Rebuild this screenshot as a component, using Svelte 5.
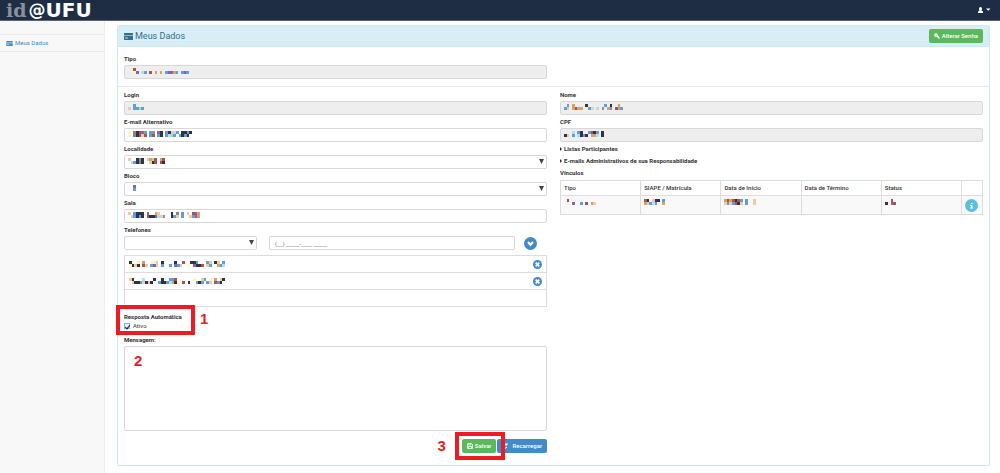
<script lang="ts">
	type Pixels = string[];

	// one letter per tile, a dot is an empty tile
	const palette: Record<string, string> = {
		k: '#333339',
		g: '#85858c',
		n: '#29306e',
		b: '#5d9fdc',
		c: '#a9e2f5',
		p: '#8a61ad',
		r: '#a9544f',
		o: '#dda062',
		s: '#f3ca9b',
		y: '#fdf3c9',
		m: '#b8d8a8'
	};
	const TILE = 8 / 3;

	const hidden: Record<string, Pixels> = {
		tipo: ['..r....................', '..yp.cb.r.o.o.bppob.bpb'],
		login: ['..b...', 's.bbmb'],
		email: ['y.gkrpb.bb.pk.bkscb.kkbk', 'y.gkrsr.br.bk.bcmb.bkbk.'],
		localidade: ['s..kbk.somr.or', '.cbkgk..skr.rk'],
		bloco: ['..p', '..b'],
		sala: ['s.bnkk.p..os....k.g.b.s.rpo', '.sbnbk.rkkpcsb..kbs.b..sbpo'],
		nome: ['.b.o....k......b.k..o.', 'bs.oroo..bc.s.b.ob.rob'],
		cpf: ['...c.bk..brkb.k', 'ks.b.ckbk.ooc.k'],
		phone1: ['k..y.o..yys.k....n..r..kkb...bs.ks.b', 'yksk.rs.bps.b..b.pbs..y.pkkr.sb..obc'],
		phone2: ['sk...c...k..k..bbr......y..sb.y.o.sk', '.skkbsnsk..bkkbcoky.r.k..bkb.bs.rbk.'],
		vTipo: ['.r..........', '.y.p..b.r.os'],
		vSiape: ['rk.snn.b', 'osbcb..o'],
		vInicio: ['ororkrb.b..s', 'sbsbrks.b..s'],
		vStatus: ['..r.', 'k.pr']
	};

	const columns = ['Tipo', 'SIAPE / Matrícula', 'Data de Início', 'Data de Término', 'Status', ''];

	let ativo = $state(true);
	let mensagem = $state('');
	let telefone = $state('(__) _____-____ _____');
	let telefones = $state(['phone1', 'phone2']);

	function removeTelefone(id: string) {
		telefones = telefones.filter((t) => t !== id);
	}
</script>

{#snippet mosaic(id: string)}
	<svg class="mosaic" width={Math.round(hidden[id][0].length * TILE)} height="6" viewBox="0 0 {hidden[id][0].length} 2" preserveAspectRatio="none" shape-rendering="crispEdges" aria-hidden="true">
		{#each hidden[id] as row, y}
			{#each row.split('') as tile, x}
				{#if palette[tile]}
					<rect {x} {y} width="1" height="1" fill={palette[tile]} />
				{/if}
			{/each}
		{/each}
	</svg>
{/snippet}

{#snippet card()}
	<svg class="card-icon" viewBox="0 0 18 14" aria-hidden="true">
		<path fill="currentColor" d="M1 0h16a1 1 0 0 1 1 1v3H0V1a1 1 0 0 1 1-1zM0 6h18v7a1 1 0 0 1-1 1H1a1 1 0 0 1-1-1z" />
		<path fill="currentColor" opacity=".4" d="M0 4h18v2H0z" />
		<path fill="#fff" opacity=".7" d="M2 9h6v2H2z" />
	</svg>
{/snippet}

{#snippet textField(id: string, label: string, locked: boolean)}
	<div class="field">
		<label for={id}>{label}</label>
		<div class="control">
			<input {id} type="text" disabled={locked} />
			{@render mosaic(id)}
		</div>
	</div>
{/snippet}

{#snippet arrow()}
	<svg class="arrow" viewBox="0 0 6 6" aria-hidden="true"><path d="M0 0h6L3 6z" fill="#444" /></svg>
{/snippet}

{#snippet selectField(id: string, label: string)}
	<div class="field">
		<label for={id}>{label}</label>
		<div class="control">
			<select {id}><option></option></select>
			{@render mosaic(id)}
			{@render arrow()}
		</div>
	</div>
{/snippet}

<div class="page">
	<header class="navbar">
		<a class="brand" href="#inicio"><span class="id">id</span><span class="at">@</span>UFU</a>
		<button class="user" aria-label="Usuário">
			<svg width="13" height="6" viewBox="0 0 26 12" aria-hidden="true">
				<path fill="#fff" d="M5 0a3 3 0 0 1 3 3c0 2-1 3-1 4l3 2v3H0V9l3-2c0-1-1-2-1-4a3 3 0 0 1 3-3zM16 3h9l-4.500 4.500z" />
			</svg>
		</button>
	</header>

	<div class="body">
		<nav class="sidebar">
			<a href="#dados">{@render card()}Meus Dados</a>
		</nav>

		<main>
			<section class="panel">
				<div class="panel-heading">
					<h1>{@render card()}Meus Dados</h1>
					<button class="btn green">
						<svg width="6" height="6" viewBox="0 0 12 12" fill="none" stroke="#fff" stroke-width="2.500" aria-hidden="true">
							<circle cx="4" cy="4" r="2.500" />
							<path d="M6 6l5 5M8 9l2-2" />
						</svg>
						Alterar Senha
					</button>
				</div>

				<div class="grid first">
					{@render textField('tipo', 'Tipo', true)}
				</div>

				<div class="grid">
					<div>
						{@render textField('login', 'Login', true)}
						{@render textField('email', 'E-mail Alternativo', false)}
						{@render selectField('localidade', 'Localidade')}
						{@render selectField('bloco', 'Bloco')}
						{@render textField('sala', 'Sala', false)}

						<div class="field">
							<label for="telefone">Telefones</label>
							<div class="phone">
								<div class="control kind">
									<select aria-label="Tipo de telefone"><option></option></select>
									{@render arrow()}
								</div>
								<div class="phone-number">
									<input id="telefone" type="text" bind:value={telefone} />
									<button class="round blue" aria-label="Adicionar telefone">
										<svg viewBox="0 0 13 13" aria-hidden="true"><path d="M4 5l2.500 3L9 5" fill="none" stroke="#fff" stroke-width="2" /></svg>
									</button>
								</div>
							</div>
						</div>

						<ul class="phones">
							{#each telefones as t (t)}
								<li>
									{@render mosaic(t)}
									<button class="remove" aria-label="Remover telefone" onclick={() => removeTelefone(t)}>
										<svg viewBox="0 0 9 9" aria-hidden="true">
											<circle cx="4.500" cy="4.500" r="4.500" fill="#428bca" />
											<path d="M2.700 2.700l3.600 3.600M6.300 2.700l-3.600 3.600" stroke="#fff" stroke-width="1.800" />
										</svg>
									</button>
								</li>
							{/each}
						</ul>

						<div class="auto-reply">
							<strong>Resposta Automática</strong>
							<label class="check"><input type="checkbox" bind:checked={ativo} />Ativo</label>
							<span class="mark">1</span>
						</div>

						<div class="field message">
							<label for="mensagem">Mensagem:</label>
							<textarea id="mensagem" bind:value={mensagem}></textarea>
							<span class="mark">2</span>
						</div>

						<div class="actions">
							<span class="mark">3</span>
							<div class="save">
								<button class="btn green">
									<svg width="6" height="6" viewBox="0 0 12 12" aria-hidden="true">
										<path d="M1 1h8l2 2v8H1zM3 1v3h5V1M3 11V7h6v4" fill="none" stroke="#fff" stroke-width="1.500" />
									</svg>
									Salvar
								</button>
							</div>
							<button class="btn blue reload">
								<svg width="6" height="6" viewBox="0 0 12 12" aria-hidden="true">
									<path d="M10 4A4.500 4.500 0 0 0 2 4M2 8a4.500 4.500 0 0 0 8 0M10 0v4H6M2 12V8h4" fill="none" stroke="#fff" stroke-width="2" />
								</svg>
								Recarregar
							</button>
						</div>
					</div>

					<div>
						{@render textField('nome', 'Nome', true)}
						{@render textField('cpf', 'CPF', true)}
						<div class="groups">
							<details><summary>Listas Participantes</summary></details>
							<details><summary>E-mails Administrativos de sua Responsabilidade</summary></details>
						</div>
						<table>
							<caption>Vínculos</caption>
							<thead>
								<tr>
									{#each columns as c}
										<th>{c}</th>
									{/each}
								</tr>
							</thead>
							<tbody>
								<tr>
									<td>{@render mosaic('vTipo')}</td>
									<td>{@render mosaic('vSiape')}</td>
									<td>{@render mosaic('vInicio')}</td>
									<td></td>
									<td>{@render mosaic('vStatus')}</td>
									<td class="info">
										<button class="round cyan" aria-label="Informações">
											<svg viewBox="0 0 13 13" aria-hidden="true"><path d="M6 4h1.500v1H6zM5 6h2.500v2.500H8v1H5v-1h1V7H5z" fill="#fff" /></svg>
										</button>
									</td>
								</tr>
							</tbody>
						</table>
					</div>
				</div>
			</section>
		</main>
	</div>
</div>

<style>
	:global(body) {
		background: #fff;
	}

	.page {
		display: flex;
		flex-direction: column;
		min-height: 100vh;
		font-family: Roboto, 'Liberation Sans', sans-serif;
		font-size: 6px;
		line-height: 12px;
		color: #333;
	}

	.page * {
		box-sizing: border-box;
	}

	button,
	input,
	select,
	textarea {
		font: inherit;
		margin: 0;
	}

	button {
		border: 0;
		cursor: pointer;
	}

	.navbar {
		display: flex;
		align-items: center;
		justify-content: space-between;
		height: 21px;
		padding: 0 9px 0 6px;
		background: #1f2d44;
		border-bottom: 1px solid #59637a;
	}

	.brand {
		display: flex;
		align-items: center;
		font: bold 20px/20px 'DejaVu Sans', sans-serif;
		color: #fff;
		text-decoration: none;
	}

	.id {
		margin-right: 2px;
		font-family: 'DejaVu Serif', serif;
		font-size: 19px;
		color: #8a919d;
	}

	.at {
		font-size: 17px;
	}

	.user {
		display: flex;
		padding: 0;
		background: none;
	}

	.body {
		display: flex;
		flex: 1;
	}

	.sidebar {
		width: 105px;
		flex-shrink: 0;
		padding-top: 13px;
		background: #f8f8f8;
		border-right: 1px solid #eee;
	}

	.sidebar a {
		display: flex;
		align-items: center;
		gap: 2px;
		height: 18px;
		padding-left: 6px;
		border: solid #ebebeb;
		border-width: 1px 0;
		color: #428bca;
		text-decoration: none;
	}

	.card-icon {
		width: 7px;
		height: 5px;
	}

	main {
		flex: 1;
		padding: 4px 10px 7px 12px;
	}

	.panel {
		border: 1px solid #cdebf2;
		border-radius: 2px;
		padding-bottom: 5px;
	}

	.panel-heading {
		display: flex;
		align-items: center;
		justify-content: space-between;
		height: 21px;
		padding: 0 6px;
		background: #d9edf7;
		border-bottom: 1px solid #cdebf2;
	}

	h1 {
		display: flex;
		align-items: center;
		gap: 2px;
		margin: 0;
		font-size: 9px;
		font-weight: 400;
		color: #31708f;
	}

	h1 .card-icon {
		width: 9px;
		height: 7px;
	}

	.grid {
		display: grid;
		grid-template-columns: 1fr 1fr;
		gap: 13px;
		padding: 1px 6px 0;
	}

	.first {
		padding: 5px 6px 7px;
		border-bottom: 1px solid #e8e8e8;
	}

	.field > label {
		display: block;
		height: 13px;
		line-height: 13px;
		font-weight: 700;
	}

	.control {
		position: relative;
	}

	.control .mosaic {
		position: absolute;
		left: 4px;
		top: 3px;
	}

	.mosaic {
		display: block;
	}

	input[type='text'],
	select,
	textarea {
		display: block;
		width: 100%;
		height: 14px;
		padding: 0 5px;
		border: 1px solid #d8d8d8;
		border-radius: 2px;
		background: #fff;
		color: #777;
		outline: 0;
	}

	input[type='text']:disabled {
		background: #eee;
	}

	select {
		appearance: none;
	}

	.arrow {
		position: absolute;
		right: 3px;
		top: 4px;
		width: 5px;
		height: 5px;
	}

	.phone {
		display: flex;
		gap: 12px;
	}

	.kind {
		flex: 133;
	}

	.phone-number {
		display: flex;
		flex: 268;
		align-items: center;
		gap: 9px;
		padding-right: 10px;
	}

	.round {
		display: block;
		flex-shrink: 0;
		width: 13px;
		height: 13px;
		padding: 0;
		border-radius: 50%;
	}

	.round svg,
	.remove svg {
		display: block;
		width: 100%;
	}

	.phones {
		min-height: 52px;
		margin: 5px 0 0;
		padding: 0;
		border: 1px solid #ddd;
		list-style: none;
	}

	.phones li {
		display: flex;
		align-items: center;
		justify-content: space-between;
		height: 17px;
		padding: 0 4px;
		border-bottom: 1px solid #ddd;
	}

	.remove {
		width: 9px;
		height: 9px;
		padding: 0;
		background: none;
	}

	.auto-reply {
		position: relative;
		display: flex;
		flex-direction: column;
		width: 79px;
		height: 30px;
		margin: -2px 0 0 -8px;
		padding: 3px 0 0 4px;
		border: 4px solid #ed1c24;
	}

	.auto-reply strong {
		line-height: 10px;
	}

	.check {
		display: flex;
		align-items: center;
		gap: 3px;
		line-height: 8px;
	}

	.check input {
		display: grid;
		place-items: center;
		appearance: none;
		width: 6px;
		height: 6px;
		border: 1px solid #7fb2ea;
		background: #e4effb;
	}

	.check input:checked::after {
		content: '';
		width: 2px;
		height: 4px;
		border: solid #222;
		border-width: 0 1px 1px 0;
		transform: rotate(40deg);
	}

	.mark {
		font: bold 15px/16px 'Liberation Sans', sans-serif;
		color: #ed1c24;
	}

	.auto-reply .mark {
		position: absolute;
		left: 80px;
		top: 2px;
	}

	.message {
		position: relative;
		margin-top: -2px;
	}

	textarea {
		height: 85px;
		resize: none;
	}

	.message .mark {
		position: absolute;
		left: 10px;
		top: 20px;
	}

	.actions {
		display: flex;
		align-items: center;
		justify-content: flex-end;
		margin-top: 1px;
	}

	.save {
		position: relative;
		margin-left: 9px;
		padding: 3px 5px 3px 3px;
		border: 4px solid #ed1c24;
	}

	.btn {
		display: flex;
		align-items: center;
		gap: 2px;
		height: 14px;
		padding: 0 5px;
		border-radius: 2px;
		color: #fff;
		font-weight: 500;
		white-space: nowrap;
	}

	.reload {
		gap: 4px;
		margin-left: -8px;
	}

	.green {
		background: #5cb85c;
	}

	.blue {
		background: #428bca;
	}

	.cyan {
		background: #5bc0de;
	}

	.groups {
		padding-top: 1px;
	}

	summary {
		display: flex;
		align-items: center;
		gap: 2px;
		font-weight: 700;
	}

	summary::before {
		content: '';
		border: solid transparent;
		border-width: 2px 0 2px 2px;
		border-left-color: #333;
	}

	table {
		width: 100%;
		border-collapse: collapse;
		table-layout: fixed;
	}

	caption {
		height: 13px;
		font-weight: 700;
		text-align: left;
	}

	th,
	td {
		height: 15px;
		padding: 0 3px;
		border: 1px solid #ddd;
		font-weight: 500;
		text-align: left;
	}

	th:last-child {
		width: 21px;
	}

	td {
		height: 19px;
		padding-top: 3px;
		background: #f9f9f9;
		vertical-align: top;
	}

	.info {
		padding-bottom: 2px;
	}
</style>
